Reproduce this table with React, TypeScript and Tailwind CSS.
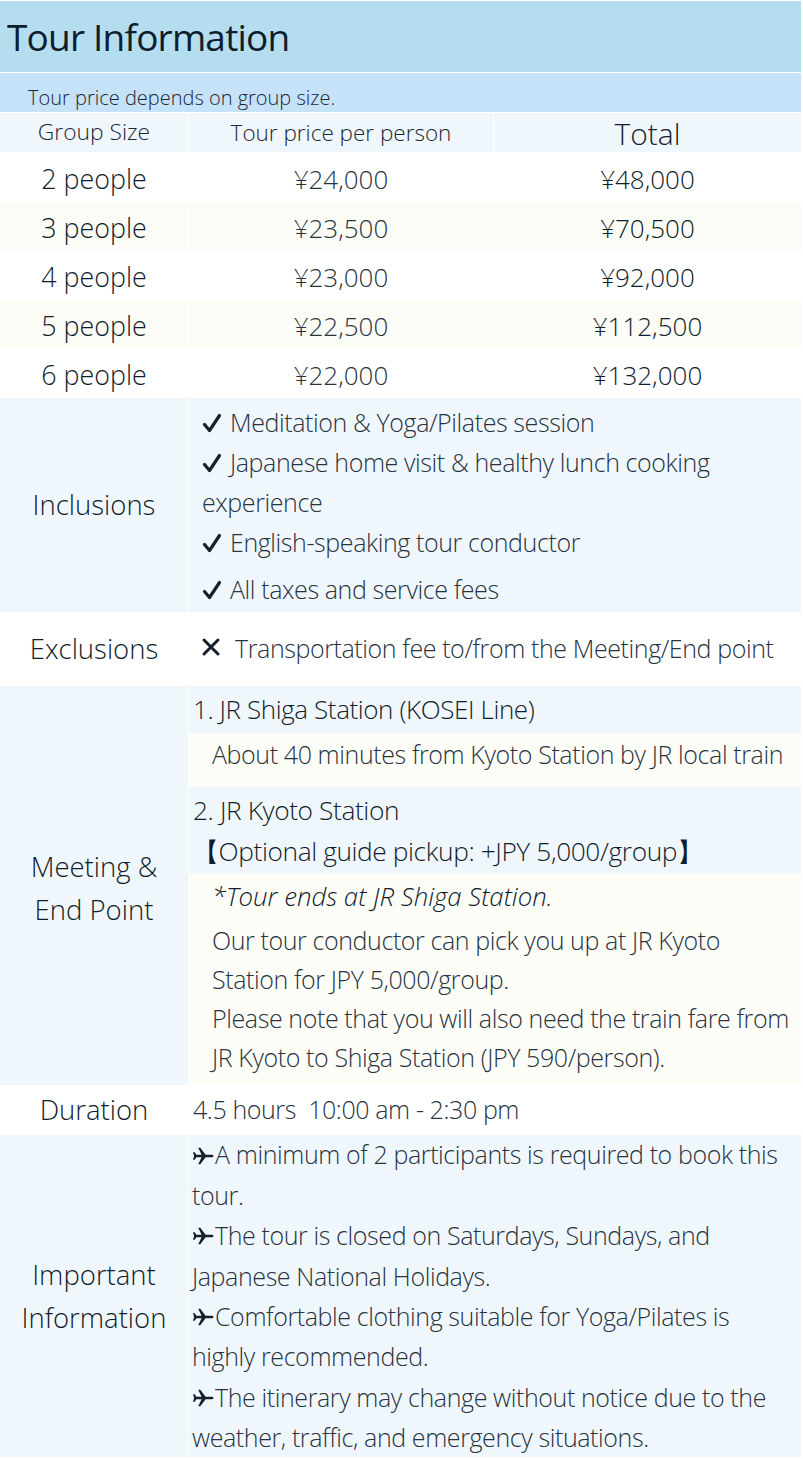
import React from "react";

const FONT = { fontFamily: '"Open Sans", "Noto Sans", sans-serif' };

function Check() {
  return (
    <svg width="20" height="20" viewBox="0 0 20 20" className="inline-block mr-[8px] -mt-[4px] align-middle">
      <path d="M2.5 11.5 L7.5 17.5 L17.5 2.5" fill="none" stroke="#14202c" strokeWidth="3.2" strokeLinecap="round" strokeLinejoin="round" />
    </svg>
  );
}

function Cross() {
  return (
    <svg width="20" height="20" viewBox="0 0 20 20" className="inline-block mr-[14px] -mt-[4px] align-middle">
      <path d="M3 3 L17 17 M17 3 L3 17" fill="none" stroke="#14202c" strokeWidth="3" strokeLinecap="round" />
    </svg>
  );
}

function Plane() {
  return (
    <svg width="22" height="18" viewBox="0 0 22 18" className="shrink-0 mr-px mt-[1px]">
      <path
        d="M21.5 9 C21.5 8 20.5 7.7 19.3 7.7 L13.6 7.7 L8.3 0.8 L6.2 0.8 L9.6 7.7 L4.4 7.7 L2.7 5.2 L1 5.2 L2.1 9 L1 12.8 L2.7 12.8 L4.4 10.3 L9.6 10.3 L6.2 17.2 L8.3 17.2 L13.6 10.3 L19.3 10.3 C20.5 10.3 21.5 10 21.5 9 Z"
        fill="#14202c"
      />
    </svg>
  );
}

const prices = [
  ["2 people", "¥24,000", "¥48,000"],
  ["3 people", "¥23,500", "¥70,500"],
  ["4 people", "¥23,000", "¥92,000"],
  ["5 people", "¥22,500", "¥112,500"],
  ["6 people", "¥22,000", "¥132,000"],
];

const LABEL = "text-[27.5px] text-[#101d2a]";

export default function App() {
  return (
    <div style={FONT} className="w-[803px] bg-white pt-px font-light text-[#28333e]">
      <div className="w-[801px] flex flex-col gap-px">
        <div className="h-[71px] bg-[#b4ddf0] flex items-center pl-[7px] text-[37px] font-normal tracking-[-0.8px] text-[#0f1c2b] leading-none">
          Tour Information
        </div>
        <div className="h-[39px] bg-[#c6e2f8] flex items-end pb-[4px] pl-[28px] text-[20px] text-[#1c2733] leading-none">
          Tour price depends on group size.
        </div>
        <div className="grid grid-cols-[188px_304px_307px] gap-px">
          <div className="h-[39px] bg-[#f0f7fc] flex items-center justify-center text-[22.8px] text-[#1c2733]">Group Size</div>
          <div className="h-[39px] bg-[#f0f7fc] flex items-center justify-center text-[22.5px] text-[#1c2733]">Tour price per person</div>
          <div className="h-[39px] bg-[#f0f7fc] flex items-center justify-center text-[30px] text-[#14202c] pt-[2px]">Total</div>
          {prices.map((r, i) => {
            const bg = i % 2 === 0 ? "bg-white" : "bg-[#fbfcf5]";
            return (
              <React.Fragment key={i}>
                <div className={`h-[48px] ${bg} flex items-center justify-center pt-[5px] text-[26.8px] text-[#101d2a]`}>{r[0]}</div>
                <div className={`h-[48px] ${bg} flex items-center justify-center pt-[5px] text-[26px] text-[#2a343e]`}>{r[1]}</div>
                <div className={`h-[48px] ${bg} flex items-center justify-center pt-[5px] text-[26px] text-[#101d2a]`}>{r[2]}</div>
              </React.Fragment>
            );
          })}
        </div>

        {/* Inclusions */}
        <div className="flex gap-px">
          <div className={`w-[188px] h-[214px] bg-[#f0f7fc] flex items-center justify-center ${LABEL}`}>Inclusions</div>
          <div className="flex-1 bg-[#f0f7fc] pl-[13px] pt-[4px] text-[25px] tracking-[-0.4px] leading-[40px] whitespace-nowrap">
            <div><Check />Meditation &amp; Yoga/Pilates session</div>
            <div><Check />Japanese home visit &amp; healthy lunch cooking</div>
            <div>experience</div>
            <div><Check />English-speaking tour conductor</div>
            <div className="mt-[7px]"><Check />All taxes and service fees</div>
          </div>
        </div>

        {/* Exclusions */}
        <div className="flex gap-px">
          <div className={`w-[188px] h-[72px] bg-white flex items-center justify-center ${LABEL}`}>Exclusions</div>
          <div className="flex-1 bg-white flex items-center pl-[12px] text-[25px] tracking-[-0.4px] whitespace-nowrap">
            <Cross />Transportation fee to/from the Meeting/End point
          </div>
        </div>

        {/* Meeting */}
        <div className="flex gap-px">
          <div className={`w-[188px] bg-[#f0f7fc] flex flex-col items-center justify-center leading-[43px] text-center pt-[4px] ${LABEL}`}>
            <div>Meeting &amp;</div>
            <div>End Point</div>
          </div>
          <div className="flex-1 flex flex-col text-[25px] whitespace-nowrap">
            <div className="h-[47px] bg-[#f0f7fc] flex items-center pl-[4px] text-[26px] tracking-[-0.4px] text-[#101d2a]">1. JR Shiga Station (KOSEI Line)</div>
            <div className="h-[54px] bg-[#fdfdf8] flex items-center pl-[23px] pb-[11px] tracking-[-0.4px]">About 40 minutes from Kyoto Station by JR local train</div>
            <div className="h-[87px] bg-[#f0f7fc] flex flex-col justify-center pl-[4px] leading-[41px] text-[26.3px] tracking-[-0.4px] text-[#101d2a]">
              <div>2. JR Kyoto Station</div>
              <div>【Optional guide pickup: +JPY 5,000/group】</div>
            </div>
            <div className="h-[211px] bg-[#fdfdf8] pl-[23px] pt-[3px] leading-[39px] tracking-[-0.4px]">
              <div className="italic text-[25.8px] tracking-normal text-[#101d2a] mb-[5px]">*Tour ends at JR Shiga Station.</div>
              <div>Our tour conductor can pick you up at JR Kyoto</div>
              <div>Station for JPY 5,000/group.</div>
              <div>Please note that you will also need the train fare from</div>
              <div>JR Kyoto to Shiga Station (JPY 590/person).</div>
            </div>
          </div>
        </div>

        {/* Duration */}
        <div className="flex gap-px">
          <div className={`w-[188px] h-[48px] bg-white flex items-center justify-center ${LABEL}`}>Duration</div>
          <div className="flex-1 bg-white flex items-center pl-[4px] text-[25px] tracking-[-0.4px] whitespace-pre">4.5 hours  10:00 am - 2:30 pm</div>
        </div>

        {/* Important */}
        <div className="flex gap-px">
          <div className={`w-[188px] bg-[#f0f7fc] flex flex-col items-center justify-center leading-[43px] text-center ${LABEL}`}>
            <div>Important</div>
            <div>Information</div>
          </div>
          <div className="flex-1 h-[322px] bg-[#f0f7fc] pl-[3px] text-[25px] tracking-[-0.4px] whitespace-nowrap">
            {[
              [true, "A minimum of 2 participants is required to book this"],
              [false, "tour."],
              [true, "The tour is closed on Saturdays, Sundays, and"],
              [false, "Japanese National Holidays."],
              [true, "Comfortable clothing suitable for Yoga/Pilates is"],
              [false, "highly recommended."],
              [true, "The itinerary may change without notice due to the"],
              [false, "weather, traffic, and emergency situations."],
            ].map(([p, t], i) => (
              <div key={i} className="h-[40.4px] flex items-center">
                {p ? <Plane /> : null}
                <span>{t as string}</span>
              </div>
            ))}
          </div>
        </div>
      </div>
    </div>
  );
}
